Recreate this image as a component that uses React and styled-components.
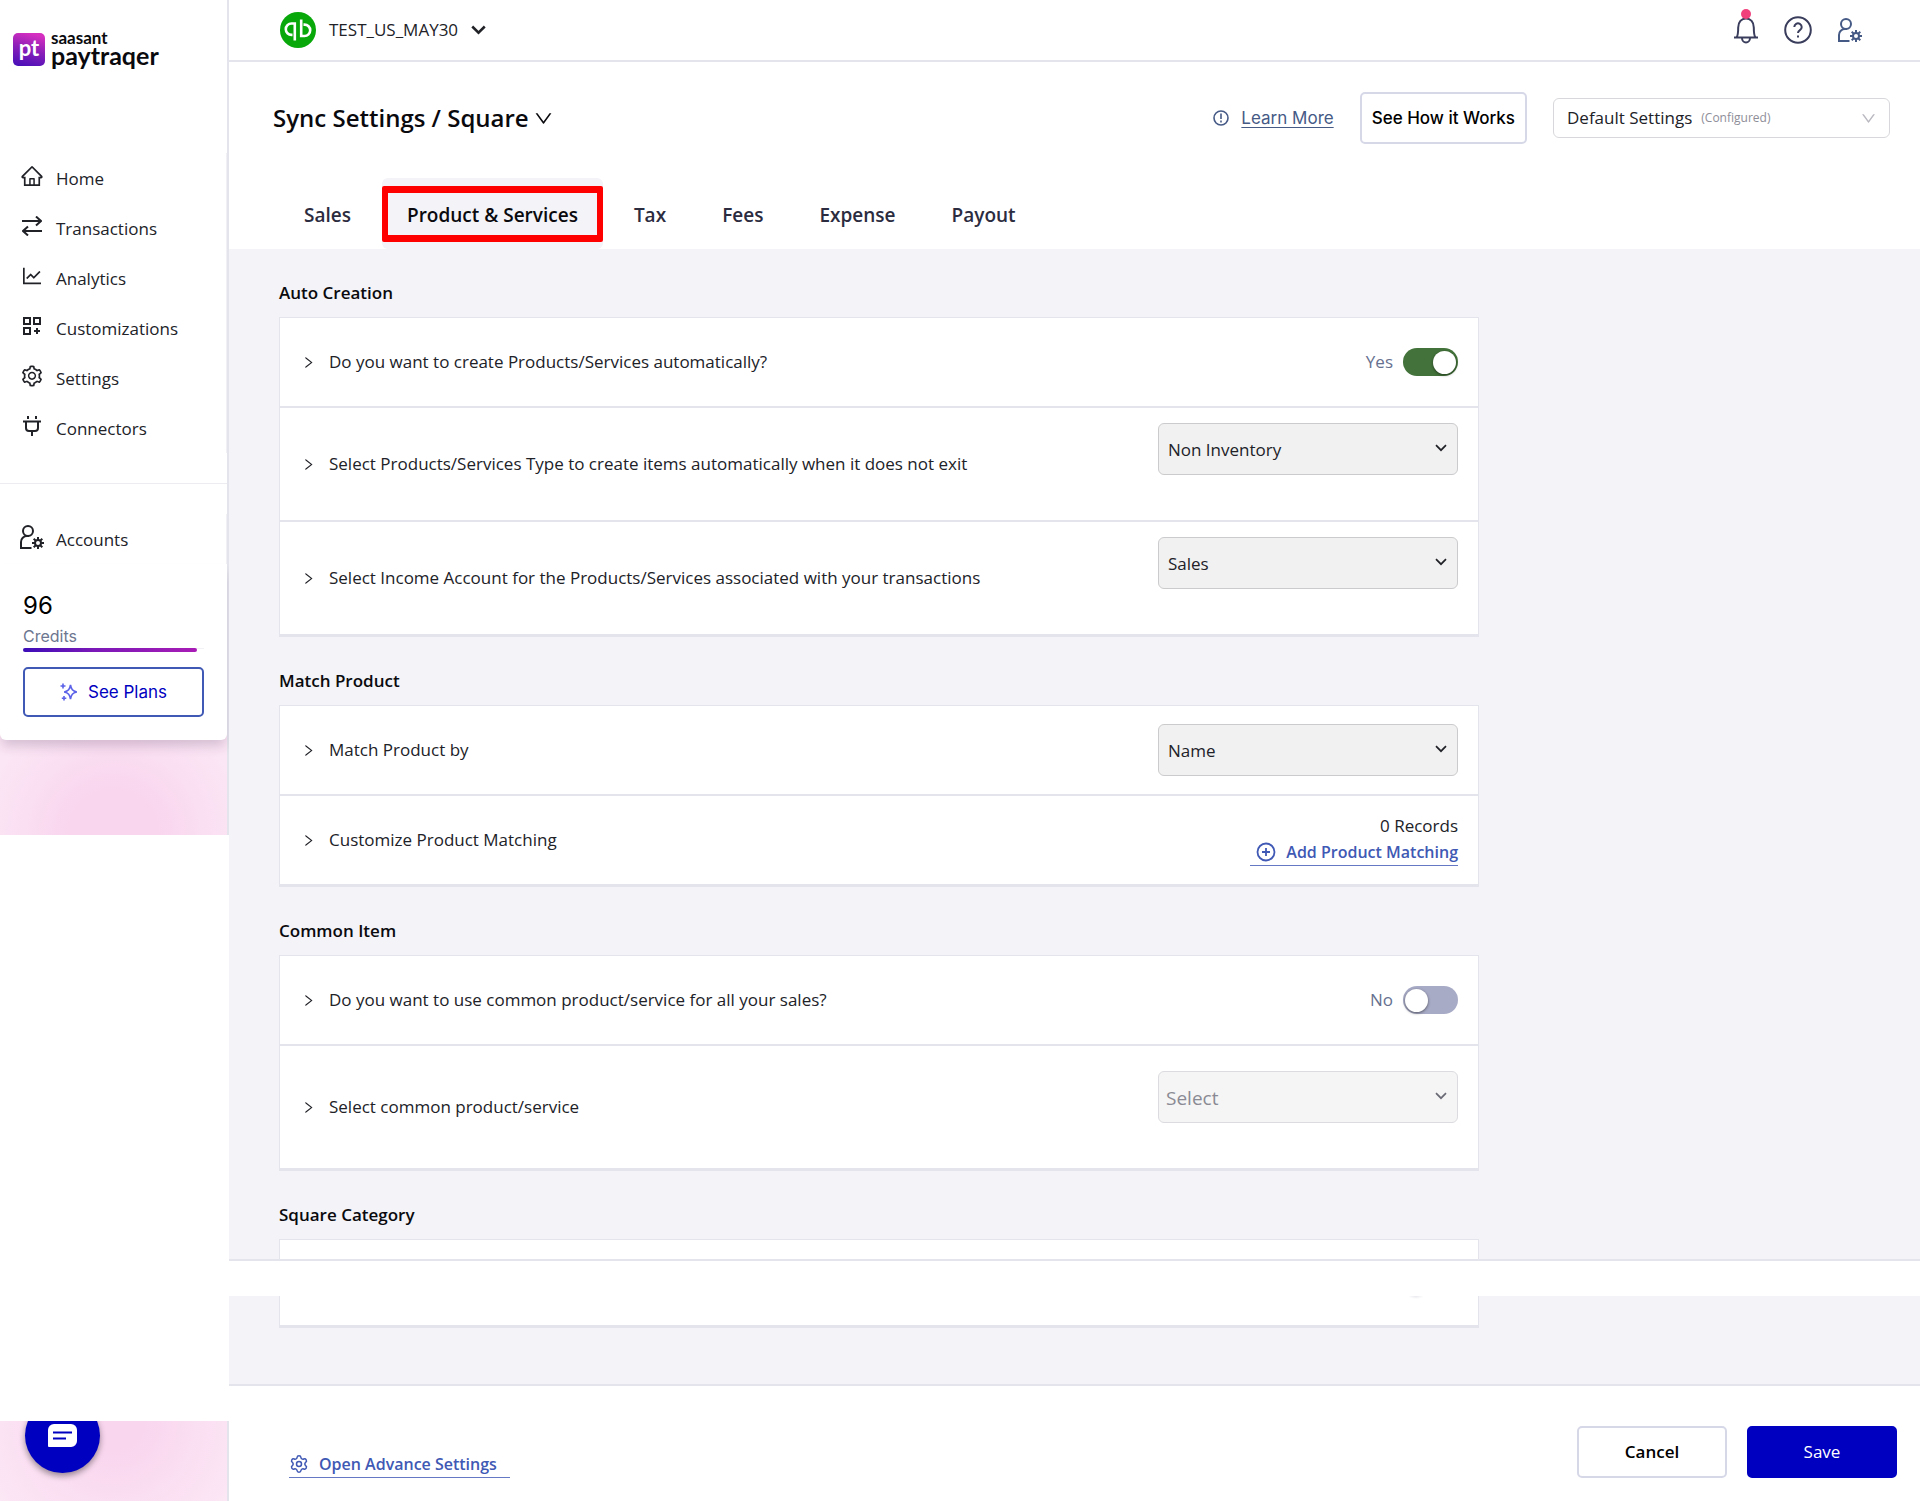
import React, { useId, useState } from "react";
import styled, { createGlobalStyle, css } from "styled-components";
import { AiOutlineHome, AiOutlineSetting, AiOutlineLineChart, AiOutlineDown, AiOutlineRight } from "react-icons/ai";
import { Settings as CogIcon } from "lucide-react";

const ui = `"Open Sans", "Noto Sans", sans-serif`;
const grotesk = `Inter, "Liberation Sans", sans-serif`;
const line = "#e4e4ec";
const canvas = "#f3f3f8";
const navy = "#0000c0";
const link = "#4059b4";

const GlobalStyle = createGlobalStyle`
  *, *::before, *::after { box-sizing: border-box; }
  body { margin: 0; background: #fff; color: #212228; font: 17px/24px ${ui}; }
  h1, h2, p, ul { margin: 0; padding: 0; }
  button, select, input { font: inherit; color: inherit; margin: 0; }
  button { cursor: pointer; }
  svg { flex: none; display: block; }
`;

const Shell = styled.div`
  display: flex;
  min-height: 100vh;
`;

/* ---------- sidebar ---------- */
const Sidebar = styled.aside`
  width: 229px;
  flex: none;
  display: flex;
  flex-direction: column;
`;
const SidePanel = styled.div`
  border-right: 2px solid ${line};
`;
const SideTop = styled.div`
  background: #fff;
`;
const Brand = styled.a`
  display: flex;
  gap: 6px;
  height: 153px;
  padding: 33px 0 0 13px;
  color: #0a0a0e;
  text-decoration: none;
`;
const BrandMark = styled.span`
  width: 32px;
  height: 33px;
  border-radius: 5px;
  background: linear-gradient(195deg, #d52fc0 10%, #8a1fb8 50%, #4a10b8 95%);
  color: #fff;
  font: 700 22px/29px Lato, sans-serif;
  text-align: center;
`;
const BrandName = styled.span`
  display: flex;
  flex-direction: column;
  font: 700 25px/24px Lato, sans-serif;
`;
const BrandOwner = styled.span`
  font-size: 17px;
  line-height: 10px;
`;
const NavList = styled.ul`
  list-style: none;
`;
const NavLink = styled.a`
  display: flex;
  align-items: center;
  gap: 12px;
  height: 50px;
  padding: 2px 0 0 20px;
  border-right: 1px solid #f0f0f5;
  color: #212228;
  text-decoration: none;
`;
const NavIcon = styled.span`
  display: flex;
  justify-content: center;
  width: 24px;
  padding-bottom: 6px;
`;
const NavRule = styled.hr`
  margin: 30px 0;
  border: 0;
  border-top: 1px solid #ececf1;
`;
const GlowArea = styled.div`
  padding-bottom: 95px;
  background: radial-gradient(circle 130px at 50% 100%, #f9d6ee 35%, #fbe6f5 100%);
`;
const Credits = styled.section`
  display: flex;
  flex-direction: column;
  height: 176px;
  padding: 28px 23px 23px;
  border-radius: 0 0 6px 6px;
  background: #fff;
  box-shadow: 0 8px 12px -2px rgba(60, 30, 70, 0.2);
  font-family: ${grotesk};
`;
const CreditCount = styled.strong`
  font-size: 24px;
  font-weight: 400;
  line-height: 28px;
  color: #000;
`;
const CreditLabel = styled.span`
  padding-top: 6px;
  font-size: 16px;
  line-height: 20px;
  color: #6d7690;
`;
const CreditTrack = styled.div`
  height: 4px;
  margin: 2px 0 15px;
  background: linear-gradient(#f1f1f6, #f1f1f6) 0 0 / 100% 1px no-repeat;
`;
const CreditFill = styled.div`
  height: 4px;
  border-radius: 2px;
  background: linear-gradient(90deg, #3c0db8, #7a18b8 40%, #a81cb5);
`;
const PlansButton = styled.button`
  display: flex;
  align-items: center;
  justify-content: center;
  gap: 10px;
  flex: none;
  height: 50px;
  border: 2px solid #4059b4;
  border-radius: 5px;
  background: #fff;
  color: ${navy};
`;
const SideGap = styled.div`
  flex: 1;
`;
const ChatCorner = styled.div`
  position: relative;
  height: 80px;
  overflow: hidden;
  border-right: 2px solid ${line};
  background: radial-gradient(circle 150px at 50% 0, #f9d6ee 20%, #fce9f6 100%);
`;
const ChatButton = styled.button`
  position: absolute;
  left: 25px;
  bottom: 28px;
  display: grid;
  place-items: center;
  width: 75px;
  height: 75px;
  padding: 0;
  border: 0;
  border-radius: 50%;
  background: ${navy};
  box-shadow: 0 3px 6px rgba(0, 0, 0, 0.4);
`;

/* ---------- top ---------- */
const Main = styled.div`
  flex: 1;
  min-width: 0;
  display: flex;
  flex-direction: column;
`;
const TopBar = styled.header`
  display: flex;
  align-items: center;
  justify-content: space-between;
  height: 62px;
  padding: 0 58px 0 51px;
  border-bottom: 2px solid ${line};
`;
const Company = styled.button`
  display: flex;
  align-items: center;
  gap: 13px;
  padding: 0;
  border: 0;
  background: none;
`;
const TopIcons = styled.div`
  display: flex;
  align-items: center;
  gap: 26px;
`;
const IconButton = styled.button`
  position: relative;
  display: flex;
  padding: 0;
  border: 0;
  background: none;
  color: ${(p) => p.$color || "#3a3d5c"};
`;
const Dot = styled.span`
  position: absolute;
  top: -7px;
  left: 7px;
  width: 10px;
  height: 10px;
  border-radius: 50%;
  background: #f0417c;
`;
const PageHead = styled.div`
  display: flex;
  align-items: center;
  justify-content: space-between;
  padding: 30px 30px 0 44px;
`;
const Title = styled.h1`
  display: flex;
  align-items: center;
  gap: 4px;
  font-size: 24px;
  line-height: 32px;
  font-weight: 600;
  color: #0a0a0e;
`;
const HeadActions = styled.div`
  display: flex;
  align-items: center;
  gap: 26px;
`;
const LearnMore = styled.a`
  display: flex;
  align-items: center;
  gap: 12px;
  color: #465a86;
  font-family: ${grotesk};
  text-decoration: none;
  span { text-decoration: underline; text-underline-offset: 3px; }
`;
const OutlineButton = styled.button`
  min-width: ${(p) => p.$min || "0"};
  height: 52px;
  padding: 0 10px;
  border: 2px solid #d6d8e8;
  border-radius: 5px;
  background: #fff;
  color: #000;
  font-weight: ${(p) => p.$weight || 600};
  font-family: ${(p) => (p.$grotesk ? grotesk : ui)};
`;
const SolidButton = styled(OutlineButton)`
  border-color: ${navy};
  background: ${navy};
  color: #fff;
`;
const ProfileBox = styled.label`
  display: flex;
  align-items: center;
  width: 337px;
  height: 40px;
  padding: 0 12px 0 13px;
  border: 1px solid #d8d8dc;
  border-radius: 6px;
  select {
    appearance: none;
    field-sizing: content;
    padding: 0;
    border: 0;
    background: none;
  }
  span {
    flex: 1;
    padding-left: 9px;
    font-size: 12px;
    color: #8e8e98;
  }
`;

const Tabs = styled.div`
  display: flex;
  gap: 6px;
  padding: 34px 50px 0;
`;
const Tab = styled.button`
  position: relative;
  height: 71px;
  padding: 2px 25px 0;
  border: 0;
  border-radius: 6px;
  background: none;
  color: #2c2c40;
  font-size: 19px;
  font-weight: 600;
  ${(p) =>
    p.$active &&
    css`
      background: ${canvas};
      color: #0a0a0e;
      &::after {
        content: "";
        position: absolute;
        inset: 8px 0 7px;
        border: solid #f00;
        border-width: 7px 6px;
        border-radius: 2px;
      }
    `}
`;

/* ---------- settings ---------- */
const Canvas = styled.div`
  padding: 0 50px;
  background: ${canvas};
  flex: ${(p) => (p.$grow ? 1 : "none")};
`;
const Section = styled.section`
  max-width: 1200px;
  padding-top: 32px;
`;
const SectionTitle = styled.h2`
  padding-bottom: 12px;
  font-size: 17px;
  line-height: 24px;
  font-weight: 600;
  color: #0a0a0e;
`;
const Card = styled.div`
  border: solid ${line};
  border-width: 1px 1px 3px;
  background: #fff;
`;
const CardStart = styled(Card)`
  height: 20px;
  border-bottom: 0;
`;
const CardEnd = styled(Card)`
  max-width: 1200px;
  height: 32px;
  border-top: 0;
  display: flex;
  justify-content: flex-end;
  padding-right: 54px;
`;
const KnobShadow = styled.span`
  width: 16px;
  height: 3px;
  background: radial-gradient(ellipse at 50% 0, #e9e9ee, #fff 70%);
`;
const Row = styled.div`
  box-sizing: content-box;
  display: flex;
  align-items: center;
  justify-content: space-between;
  min-height: ${(p) => p.$height || 88}px;
  padding: 0 20px 0 21px;
  & + & {
    border-top: 2px solid ${line};
  }
`;
const RowLabel = styled.button`
  display: flex;
  align-items: center;
  gap: 13px;
  padding: 0;
  border: 0;
  background: none;
  text-align: left;
`;
const SelectWrap = styled.span`
  position: relative;
  width: 300px;
  height: 52px;
  margin-bottom: ${(p) => p.$hint || 0}px;
  color: ${(p) => (p.$dim ? "#6a6a76" : "#212228")};
  select {
    appearance: none;
    width: 100%;
    height: 52px;
    padding: 2px 40px 0 ${(p) => (p.$dim ? 7 : 9)}px;
    border: 1px solid ${(p) => (p.$dim ? "#dcdce0" : "#cbcbce")};
    border-radius: 6px;
    background: ${(p) => (p.$dim ? "#f5f5f5" : "#f1f1f1")};
    color: ${(p) => (p.$dim ? "#8a8a94" : "#212228")};
    font-size: ${(p) => (p.$dim ? 19 : 17)}px;
    opacity: 1;
  }
  svg {
    position: absolute;
    right: 11px;
    top: 21px;
    pointer-events: none;
  }
`;
const SwitchLabel = styled.label`
  display: flex;
  align-items: center;
  gap: 10px;
  color: #66708f;
`;
const Switch = styled.input`
  appearance: none;
  display: flex;
  align-items: center;
  justify-content: ${(p) => (p.checked ? "flex-end" : "flex-start")};
  width: 55px;
  height: 28px;
  padding: 0 2px;
  border-radius: 14px;
  background: ${(p) => (p.checked ? "#43733a" : "#a8abc6")};
  cursor: pointer;
  &::before {
    content: "";
    width: 23px;
    height: 23px;
    border-radius: 50%;
    background: #fff;
    box-shadow: 0 1px 3px rgba(0, 0, 0, 0.5);
  }
`;
const Records = styled.div`
  display: flex;
  flex-direction: column;
  align-items: flex-end;
`;
const ActionLink = styled.a`
  display: flex;
  align-items: center;
  gap: 10px;
  height: 28px;
  padding: ${(p) => p.$pad || "0"};
  border-bottom: 1px solid #6478c4;
  color: ${link};
  font-size: 16px;
  font-weight: 600;
  text-decoration: none;
`;
const Strip = styled.div`
  height: 37px;
  border-top: 2px solid ${line};
  background: #fff;
`;
const Footer = styled.footer`
  display: flex;
  align-items: flex-end;
  justify-content: space-between;
  padding: 40px 23px 23px 60px;
  border-top: 2px solid ${line};
`;
const FooterButtons = styled.div`
  display: flex;
  gap: 20px;
`;

/* ---------- drawings ---------- */
const Stroke = ({ w, h = w, vb = "0 0 24 24", sw = 2, children, ...rest }) => (
  <svg width={w} height={h} viewBox={vb} fill="none" stroke="currentColor" strokeWidth={sw} aria-hidden="true" {...rest}>
    {children}
  </svg>
);
const SwapIcon = () => (
  <Stroke w={20} vb="0 0 20 20" sw={2}>
    <path d="M0 5h19M14 0.5 19 5l-5 4.500M20 15H1M6 10.500 1 15l5 4.500" />
  </Stroke>
);
const AppsIcon = () => (
  <Stroke w={18} vb="0 0 18 18" sw={2}>
    <path d="M1 1h6v6H1zM11 1h6v6h-6zM1 11h6v6H1zM14 11v6M11 14h6" />
  </Stroke>
);
const PlugIcon = () => (
  <Stroke w={20} vb="0 0 20 20" sw={2}>
    <path d="M1 5.500h18M4 5.500V12a3 3 0 0 0 3 3h6a3 3 0 0 0 3-3V5.500M6 0v3M14 0v3M10 15v5" />
  </Stroke>
);
const UserGearIcon = ({ size = 24, sw = 2 }) => (
  <Stroke w={size} sw={sw}>
    <circle cx="8" cy="6" r="5" />
    <path d="M11.500 23H1v-6a6 6 0 0 1 6-6h2" />
    <circle cx="18" cy="18" r="3" />
    <path d="M18 12v3M18 21v3M12 18h3M21 18h3M13.700 13.700l2.200 2.200M20.100 20.100l2.200 2.200M22.300 13.700l-2.200 2.200M15.900 20.100l-2.200 2.200" />
  </Stroke>
);
const BellIcon = () => (
  <Stroke w={24} h={28} vb="0 0 24 28">
    <path d="M0 21.500h24M2.500 21.500c1.300-1.500 1.700-4 1.700-10C4.200 6 7.500 2.500 12 2.500s7.800 3.500 7.800 9c0 6 .4 8.500 1.700 10M8 22a4 4.500 0 0 0 8 0" />
  </Stroke>
);
const HelpIcon = () => (
  <Stroke w={28} vb="0 0 28 28">
    <circle cx="14" cy="14" r="12.800" />
    <path d="M10.300 11a3.700 3.700 0 1 1 5.600 3.200c-1.300.8-1.900 1.400-1.900 2.800M14 19.500v2" />
  </Stroke>
);
const InfoIcon = () => (
  <Stroke w={16} vb="0 0 16 16" sw={1.6}>
    <circle cx="8" cy="8" r="7" />
    <path d="M8 3.500v5.500M8 10.500v2" />
  </Stroke>
);
const PlusCircleIcon = () => (
  <Stroke w={20} vb="0 0 20 20" sw={1.8}>
    <circle cx="10" cy="10" r="8.500" />
    <path d="M10 6v8M6 10h8" />
  </Stroke>
);
const Chevron = ({ w = 12, sw = 1.7 }) => (
  <Stroke w={w} h={(w * 8) / 12} vb="0 0 12 8" sw={sw}>
    <path d="M1 1.200 6 6.200l5-5" />
  </Stroke>
);
const SparkIcon = () => (
  <Stroke w={18} vb="0 0 18 18" sw={1.6} style={{ color: "#5b62e8" }}>
    <path d="M10.500 2c.8 4.500 2 6 6.300 7-4.300 1-5.500 2.500-6.300 7-.8-4.500-2-6-6.300-7 4.300-1 5.500-2.500 6.300-7zM3 .5v5M.5 3h5M4 13v4.500M1.800 15.200h4.500" />
  </Stroke>
);
const QbLogo = () => (
  <svg width="36" height="36" viewBox="0 0 36 36" aria-hidden="true">
    <circle cx="18" cy="18" r="18" fill="#08a70a" />
    <g fill="none" stroke="#fff" strokeWidth="2.600">
      <path d="M14.800 28.500V11.500h-3.300a5.700 5.700 0 0 0 0 11.400h1" />
      <path d="M21.200 7.500v16.500h3.300a5.700 5.700 0 0 0 0-11.400h-1" />
    </g>
  </svg>
);
const ChatIcon = () => (
  <svg width="29" height="23" viewBox="0 0 29 23" aria-hidden="true">
    <path d="M6 0h17a6 6 0 0 1 6 6v11a6 6 0 0 1-6 6H1a1 1 0 0 1-1-1V6a6 6 0 0 1 6-6z" fill="#fff" />
    <path d="M5 8.500h19M5 14.500h13" stroke="#0000c0" strokeWidth="2.200" />
  </svg>
);

/* ---------- parts ---------- */
function NavItem({ icon, children }) {
  return (
    <li>
      <NavLink href="#">
        <NavIcon>{icon}</NavIcon>
        {children}
      </NavLink>
    </li>
  );
}
function Expander({ id, children }) {
  return (
    <RowLabel type="button" id={id}>
      <AiOutlineRight size={15} />
      {children}
    </RowLabel>
  );
}
function SelectRow({ label, value, height, hint, disabled }) {
  const id = useId();
  return (
    <Row $height={height}>
      <Expander id={id}>{label}</Expander>
      <SelectWrap $hint={hint} $dim={disabled}>
        <select aria-labelledby={id} disabled={disabled} defaultValue={value}>
          <option>{value}</option>
        </select>
        <Chevron />
      </SelectWrap>
    </Row>
  );
}
function SwitchRow({ label, initial }) {
  const id = useId();
  const [on, setOn] = useState(initial);
  return (
    <Row>
      <Expander id={id}>{label}</Expander>
      <SwitchLabel>
        {on ? "Yes" : "No"}
        <Switch type="checkbox" role="switch" aria-labelledby={id} checked={on} onChange={() => setOn(!on)} />
      </SwitchLabel>
    </Row>
  );
}

const tabs = ["Sales", "Product & Services", "Tax", "Fees", "Expense", "Payout"];

export default function App() {
  const [active, setActive] = useState("Product & Services");
  const used = 96;
  return (
    <Shell>
      <GlobalStyle />
      <Sidebar>
        <SidePanel>
          <SideTop>
            <Brand href="#">
              <BrandMark>pt</BrandMark>
              <BrandName>
                <BrandOwner>saasant</BrandOwner>
                paytraqer
              </BrandName>
            </Brand>
            <nav>
              <NavList>
                <NavItem icon={<AiOutlineHome size={24} />}>Home</NavItem>
                <NavItem icon={<SwapIcon />}>Transactions</NavItem>
                <NavItem icon={<AiOutlineLineChart size={24} />}>Analytics</NavItem>
                <NavItem icon={<AppsIcon />}>Customizations</NavItem>
                <NavItem icon={<AiOutlineSetting size={24} />}>Settings</NavItem>
                <NavItem icon={<PlugIcon />}>Connectors</NavItem>
              </NavList>
              <NavRule />
              <NavList>
                <NavItem icon={<UserGearIcon />}>Accounts</NavItem>
              </NavList>
            </nav>
          </SideTop>
          <GlowArea>
            <Credits>
              <CreditCount>{used}</CreditCount>
              <CreditLabel>Credits</CreditLabel>
              <CreditTrack>
                <CreditFill style={{ width: `${used}%` }} />
              </CreditTrack>
              <PlansButton type="button">
                <SparkIcon />
                See Plans
              </PlansButton>
            </Credits>
          </GlowArea>
        </SidePanel>
        <SideGap />
        <ChatCorner>
          <ChatButton type="button" aria-label="Chat">
            <ChatIcon />
          </ChatButton>
        </ChatCorner>
      </Sidebar>

      <Main>
        <TopBar>
          <Company type="button">
            <QbLogo />
            TEST_US_MAY30
            <Chevron w={15} sw={2} />
          </Company>
          <TopIcons>
            <IconButton type="button" aria-label="Notifications">
              <BellIcon />
              <Dot />
            </IconButton>
            <IconButton type="button" aria-label="Help">
              <HelpIcon />
            </IconButton>
            <IconButton type="button" aria-label="Account" $color="#465a86">
              <UserGearIcon />
            </IconButton>
          </TopIcons>
        </TopBar>

        <PageHead>
          <Title>
            Sync Settings / Square
            <AiOutlineDown size={21} />
          </Title>
          <HeadActions>
            <LearnMore href="#">
              <InfoIcon />
              <span>Learn More</span>
            </LearnMore>
            <OutlineButton type="button" $grotesk $weight={500}>
              See How it Works
            </OutlineButton>
            <ProfileBox>
              <select aria-label="Settings profile" defaultValue="Default Settings">
                <option>Default Settings</option>
              </select>
              <span>(Configured)</span>
              <AiOutlineDown size={17} color="#b8b8c0" />
            </ProfileBox>
          </HeadActions>
        </PageHead>

        <Tabs role="tablist">
          {tabs.map((t) => (
            <Tab key={t} type="button" role="tab" aria-selected={t === active} $active={t === active} onClick={() => setActive(t)}>
              {t}
            </Tab>
          ))}
        </Tabs>

        <Canvas>
          <Section>
            <SectionTitle>Auto Creation</SectionTitle>
            <Card>
              <SwitchRow label="Do you want to create Products/Services automatically?" initial />
              <SelectRow
                label="Select Products/Services Type to create items automatically when it does not exit"
                value="Non Inventory"
                height={112}
                hint={30}
              />
              <SelectRow
                label="Select Income Account for the Products/Services associated with your transactions"
                value="Sales"
                height={112}
                hint={30}
              />
            </Card>
          </Section>
          <Section>
            <SectionTitle>Match Product</SectionTitle>
            <Card>
              <SelectRow label="Match Product by" value="Name" />
              <Row>
                <Expander>Customize Product Matching</Expander>
                <Records>
                  0 Records
                  <ActionLink href="#" $pad="0 0 0 6px">
                    <PlusCircleIcon />
                    Add Product Matching
                  </ActionLink>
                </Records>
              </Row>
            </Card>
          </Section>
          <Section>
            <SectionTitle>Common Item</SectionTitle>
            <Card>
              <SwitchRow label="Do you want to use common product/service for all your sales?" initial={false} />
              <SelectRow label="Select common product/service" value="Select" height={122} hint={20} disabled />
            </Card>
          </Section>
          <Section>
            <SectionTitle>Square Category</SectionTitle>
            <CardStart />
          </Section>
        </Canvas>
        <Strip />
        <Canvas $grow>
          <CardEnd>
            <KnobShadow />
          </CardEnd>
        </Canvas>

        <Footer>
          <ActionLink href="#" $pad="0 13px 0 0">
            <CogIcon size={20} strokeWidth={1.8} />
            Open Advance Settings
          </ActionLink>
          <FooterButtons>
            <OutlineButton type="button" $min="150px">
              Cancel
            </OutlineButton>
            <SolidButton type="button" $min="150px" $weight={400}>
              Save
            </SolidButton>
          </FooterButtons>
        </Footer>
      </Main>
    </Shell>
  );
}
